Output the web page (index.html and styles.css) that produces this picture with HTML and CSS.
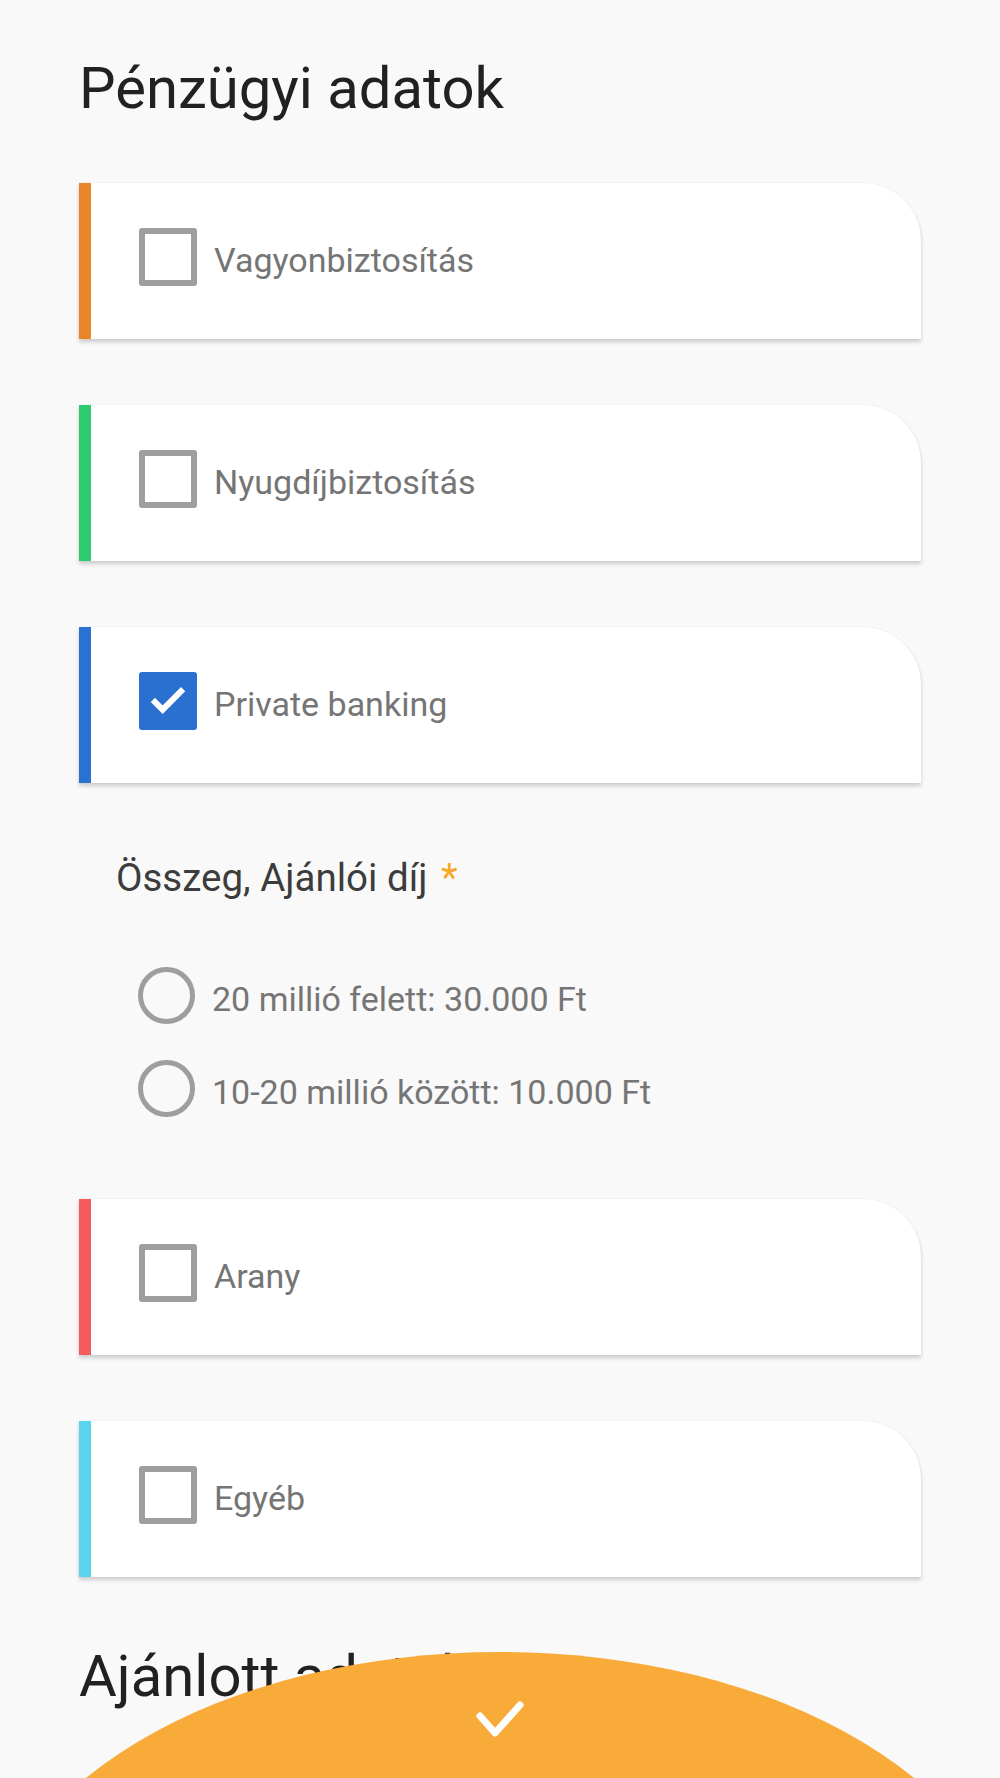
FILE: index.html
```html
<!DOCTYPE html>
<html lang="hu">
<head>
<meta charset="utf-8">
<title>Pénzügyi adatok</title>
<link rel="stylesheet" href="styles.css">
</head>
<body>
<main class="page">
  <h1 class="title">Pénzügyi adatok</h1>

  <div class="card card--orange">
    <span class="box"></span>
    <span class="label">Vagyonbiztosítás</span>
  </div>

  <div class="card card--green">
    <span class="box"></span>
    <span class="label">Nyugdíjbiztosítás</span>
  </div>

  <div class="card card--blue">
    <span class="box box--checked">
      <svg viewBox="0 0 24 24" width="40" height="40"><path d="M4.2 12.6l4.6 4.6L19.8 6.2" fill="none" stroke="#fff" stroke-width="3.6" stroke-linecap="square"/></svg>
    </span>
    <span class="label">Private banking</span>
  </div>

  <section class="sub">
    <div class="sub-label">Összeg, Ajánlói díj <span class="req">*</span></div>
    <div class="radios">
      <div class="radio-row"><span class="radio"></span><span class="label">20 millió felett: 30.000 Ft</span></div>
      <div class="radio-row"><span class="radio"></span><span class="label">10-20 millió között: 10.000 Ft</span></div>
    </div>
  </section>

  <div class="card card--red">
    <span class="box"></span>
    <span class="label">Arany</span>
  </div>

  <div class="card card--cyan">
    <span class="box"></span>
    <span class="label">Egyéb</span>
  </div>

  <h2 class="title title--second">Ajánlott adatok</h2>
</main>

<div class="fab">
  <svg viewBox="0 0 58 44" width="58" height="44"><path d="M9 18L24 35 49 7" fill="none" stroke="#fff" stroke-width="7" stroke-linecap="round" stroke-linejoin="round"/></svg>
</div>
</body>
</html>
```

FILE: styles.css
```css
html, body {
  margin: 0;
  padding: 0;
  height: 100%;
  overflow: hidden;
}

body {
  background: #f9f9f9;
  font-family: Roboto, "Noto Sans", Arial, sans-serif;
  position: relative;
}

.page {
  padding: 53px 0 0 79px;
  width: 842px;
}

.title {
  margin: 0;
  font-size: 58px;
  line-height: 70px;
  font-weight: 400;
  color: #212121;
}

.title--second {
  margin-top: 64px;
}

.card {
  margin-top: 60px;
  height: 156px;
  background: #fff;
  border-left: 12px solid #e8852a;
  border-top-right-radius: 58px;
  box-shadow: 0 3px 4px rgba(0, 0, 0, 0.18), 0 0 2px rgba(0, 0, 0, 0.06);
  display: flex;
  align-items: center;
  padding-left: 48px;
  padding-bottom: 8px;
  box-sizing: border-box;
  gap: 17px;
}

.card + .card { margin-top: 66px; }

.card--orange { border-left-color: #e8852a; }
.card--green { border-left-color: #2ecc71; }
.card--blue { border-left-color: #2a72d2; }
.card--red { border-left-color: #f25c5c; }
.card--cyan { border-left-color: #5ad3ef; }

.box {
  width: 58px;
  height: 58px;
  box-sizing: border-box;
  border: 6px solid #9e9e9e;
  border-radius: 3px;
  flex: none;
  display: flex;
  align-items: center;
  justify-content: center;
}

.box--checked {
  background: #2a70d0;
  border: none;
}

.label {
  font-size: 34px;
  color: #757575;
  line-height: 40px;
  padding-top: 6px;
}

.sub {
  padding: 73px 0 0 37px;
  height: 356px;
  box-sizing: border-box;
}

.sub-label {
  font-size: 38.5px;
  line-height: 44px;
  color: #3c3c3c;
}

.req {
  color: #f9a825;
  margin-left: 4px;
}

.radios {
  padding: 67px 0 0 22px;
  display: flex;
  flex-direction: column;
  gap: 36px;
}

.radio-row {
  display: flex;
  align-items: center;
  gap: 17px;
}

.radio {
  width: 57px;
  height: 57px;
  box-sizing: border-box;
  border: 5px solid #9e9e9e;
  border-radius: 50%;
  flex: none;
}

.fab {
  position: absolute;
  left: -12px;
  top: 1652px;
  width: 1024px;
  height: 612px;
  border-radius: 50%;
  background: #f8ab39;
  display: flex;
  justify-content: center;
  align-items: flex-start;
  padding-top: 46px;
  box-sizing: border-box;
}
```
